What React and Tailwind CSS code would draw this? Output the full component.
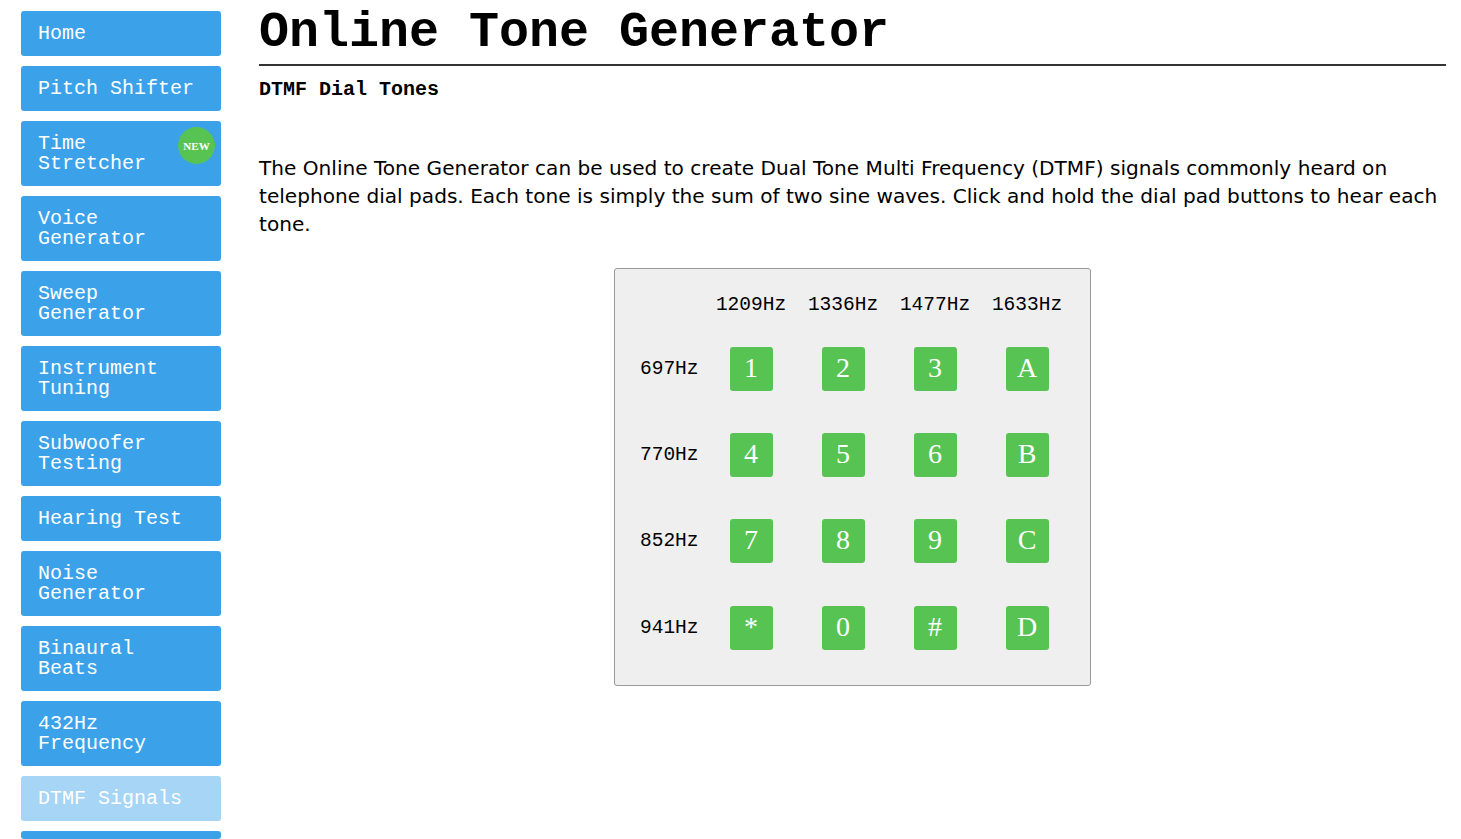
import React from "react";

const nav = [
  ["Home"],
  ["Pitch Shifter"],
  ["Time", "Stretcher", true],
  ["Voice", "Generator"],
  ["Sweep", "Generator"],
  ["Instrument", "Tuning"],
  ["Subwoofer", "Testing"],
  ["Hearing Test"],
  ["Noise", "Generator"],
  ["Binaural", "Beats"],
  ["432Hz", "Frequency"],
];

const cols = ["1209Hz", "1336Hz", "1477Hz", "1633Hz"];
const rows = [
  ["697Hz", ["1", "2", "3", "A"]],
  ["770Hz", ["4", "5", "6", "B"]],
  ["852Hz", ["7", "8", "9", "C"]],
  ["941Hz", ["*", "0", "#", "D"]],
];

const rowMt = ["mt-[32px]", "mt-[42px]", "mt-[42px]", "mt-[43px]"];

const mono = { fontFamily: '"Liberation Mono", "Courier New", monospace' };

export default function App() {
  return (
    <div className="flex w-[1461px] h-[839px] overflow-hidden bg-white" style={mono}>
      <nav className="flex flex-col gap-[10px] pl-[21px] pt-[11px] w-[238px] shrink-0">
        {nav.map((n, i) => (
          <div
            key={i}
            className="relative w-[200px] rounded-[3px] bg-[#3ba2ea] text-white text-[20px] leading-[20px] pl-[17px] pr-2 py-[12.5px]"
          >
            {n.length === 1 ? (
              <div>{n[0]}</div>
            ) : (
              <>
                <div>{n[0]}</div>
                <div>{n[1]}</div>
              </>
            )}
            {n[2] && (
              <span className="absolute right-[6px] top-[6px] w-[37px] h-[37px] rounded-full bg-[#57c353] flex items-center justify-center text-[11px] font-bold text-white" style={{ fontFamily: '"Liberation Serif", serif' }}>
                NEW
              </span>
            )}
          </div>
        ))}
        <div className="w-[200px] rounded-[3px] bg-[#a6d5f5] text-white text-[20px] leading-[20px] pl-[17px] py-[12.5px]">
          DTMF Signals
        </div>
        <div className="w-[200px] h-[45px] rounded-[3px] bg-[#3ba2ea]"></div>
      </nav>
      <main className="flex-1 pl-[21px] pr-[15px]">
        <h1 className="text-[50px] leading-[50px] font-bold text-black pt-[8px] pb-[6px] border-b-2 border-[#333]">
          Online Tone Generator
        </h1>
        <h2 className="text-[20px] leading-[20px] font-bold mt-[14px] text-black">DTMF Dial Tones</h2>
        <p
          className="mt-[54px] text-[20.1px] leading-[28px] text-black"
          style={{ fontFamily: 'Tahoma, "DejaVu Sans", sans-serif' }}
        >
          The Online Tone Generator can be used to create Dual Tone Multi Frequency (DTMF) signals commonly heard on telephone dial pads. Each tone is simply the sum of two sine waves. Click and hold the dial pad buttons to hear each tone.
        </p>
        <div className="flex justify-center mt-[30px]">
          <div className="w-[477px] h-[418px] bg-[#efefef] border border-[#999] rounded-[3px] pt-[26px] pl-[25px]">
            <div className="grid grid-cols-[65px_92px_92px_92px_92px] items-center">
              <div></div>
              {cols.map((c) => (
                <div key={c} className="text-[19.5px] leading-[20px] text-black h-[20px] flex justify-center">
                  {c}
                </div>
              ))}
            </div>
            {rows.map(([label, keys], ri) => (
              <div key={label} className={`grid grid-cols-[65px_92px_92px_92px_92px] items-center ${rowMt[ri]}`}>
                <div className="text-[19.5px] leading-[20px] text-black">{label}</div>
                {keys.map((k) => (
                  <div key={k} className="flex justify-center">
                    <div
                      className="w-[43px] h-[44px] rounded-[3px] bg-[#57c353] text-white text-[28px] leading-[28px] pb-[3px] flex items-center justify-center"
                      style={{ fontFamily: '"Liberation Serif", "Times New Roman", serif' }}
                    >
                      {k}
                    </div>
                  </div>
                ))}
              </div>
            ))}
          </div>
        </div>
      </main>
    </div>
  );
}
